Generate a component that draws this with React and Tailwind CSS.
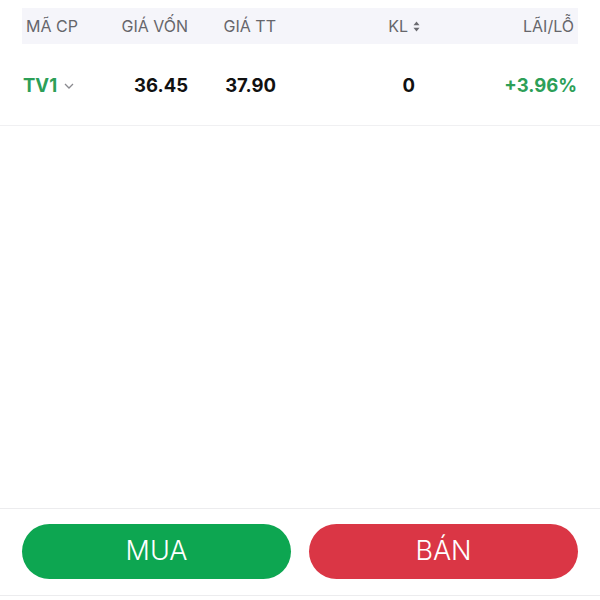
import React from 'react';

function SortIcon() {
    return (
        <svg width="7" height="11" viewBox="0 0 7 11" className="ml-[5px]">
            <path d="M3.5 0.5 L6.5 4.2 L0.5 4.2 Z" fill="#6b6b70" />
            <path d="M3.5 10.5 L6.5 6.8 L0.5 6.8 Z" fill="#6b6b70" />
        </svg>
    );
}

function Chevron() {
    return (
        <svg width="10" height="6" viewBox="0 0 10 6" className="ml-[7px] mt-[1px]">
            <path d="M1 1 L5 5 L9 1" fill="none" stroke="#8a8a8f" strokeWidth="1.3" />
        </svg>
    );
}

export default function App() {
    const font = { fontFamily: 'Inter, "Noto Sans", sans-serif' };

    return (
        <div className="w-[600px] h-[600px] bg-white flex flex-col" style={font}>
            <div className="pt-2 px-[22px]">
                <div className="flex items-center h-9 bg-[#f5f5fa] text-[16px] text-[#66666b] px-1">
                    <div className="w-[76px]">MÃ CP</div>
                    <div className="w-[86px] text-right">GIÁ VỐN</div>
                    <div className="w-[88px] text-right">GIÁ TT</div>
                    <div className="w-[144px] flex items-center justify-end">
                        KL<SortIcon />
                    </div>
                    <div className="flex-1 text-right">LÃI/LỖ</div>
                </div>
            </div>
            <div className="flex items-center h-[82px] pt-[2px] border-b border-[#f0f0f2] px-[23px] text-[18.5px] font-bold text-[#111]">
                <div className="w-[77px] flex items-center text-[#2d9f58]">
                    TV1<Chevron />
                </div>
                <div className="w-[88px] text-right">36.45</div>
                <div className="w-[88px] text-right">37.90</div>
                <div className="w-[139px] text-right">0</div>
                <div className="flex-1 text-right text-[#2d9f58]">+3.96%</div>
            </div>
            <div className="flex-1" />
            <div className="border-t border-[#ececee] border-b pb-[16px] pt-[15px] px-[22px] flex gap-[18px]">
                <button className="flex-1 h-[55px] rounded-full bg-[#0da651] text-white text-[27px] font-light">
                    MUA
                </button>
                <button className="flex-1 h-[55px] rounded-full bg-[#da3645] text-white text-[27px] font-light">
                    BÁN
                </button>
            </div>
            <div className="h-[4px]" />
        </div>
    );
}
